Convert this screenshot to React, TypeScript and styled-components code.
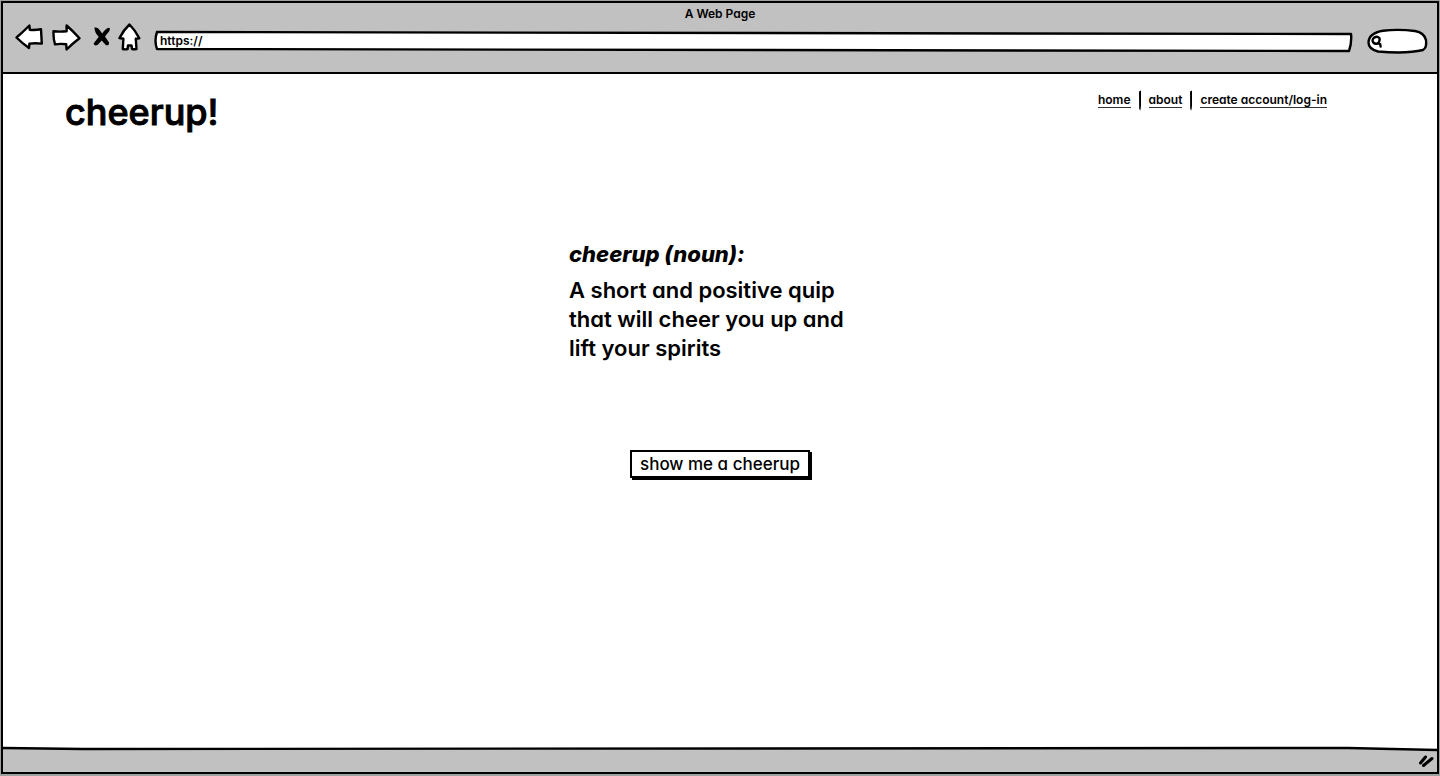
import React from "react";
import styled, { createGlobalStyle } from "styled-components";

const GlobalStyle = createGlobalStyle`
  *, *::before, *::after { box-sizing: border-box; }
  body {
    margin: 0;
    background: #fff;
    color: #000;
    font-family: Inter, Lato, sans-serif;
    font-feature-settings: "cv11" 1, "calt" 0;
    font-weight: 600;
  }
  h1, h2, p { margin: 0; }
  button, input { font: inherit; color: inherit; font-feature-settings: inherit; }
`;

const Frame = styled.div`
  min-height: 100vh;
  display: flex;
  flex-direction: column;
  padding: 1px 1px 2px;
  background: #9da19f;
`;

const Browser = styled.div`
  flex: 1;
  display: flex;
  flex-direction: column;
  border: 2px solid #000;
  background: #fff;
`;

const Chrome = styled.header`
  background: #c1c1c1;
  border-bottom: 2px solid #000;
  height: 71px;
`;

const WindowTitle = styled.div`
  padding-top: 3px;
  font-size: 12px;
  line-height: 16px;
  text-align: center;
`;

const Toolbar = styled.div`
  display: flex;
  align-items: center;
  padding: 0 9px 0 12px;
  height: 30px;
`;

const IconButton = styled.button<{ $gap: number }>`
  display: block;
  padding: 0;
  margin-right: ${(p) => p.$gap}px;
  border: 0;
  background: none;
  svg { display: block; }
`;

const Field = styled.label<{ $wide?: boolean }>`
  position: relative;
  display: flex;
  align-items: center;
  flex: ${(p) => (p.$wide ? "1 1 auto" : "0 0 61px")};
  height: ${(p) => (p.$wide ? 22 : 26)}px;
  margin-left: ${(p) => (p.$wide ? 0 : 14)}px;
  margin-top: 8px;
`;

const Outline = styled.svg`
  position: absolute;
  inset: 0;
  width: 100%;
  height: 100%;
  overflow: visible;
  path { vector-effect: non-scaling-stroke; }
`;

const FieldInput = styled.input`
  position: relative;
  width: 100%;
  min-width: 0;
  padding: 0 6px;
  border: 0;
  outline: 0;
  background: transparent;
  font-size: 12px;
  line-height: 16px;
`;

const SearchIcon = styled.svg`
  position: relative;
  flex: none;
  margin-left: 4px;
`;

const Page = styled.main`
  flex: 1;
  display: flex;
  flex-direction: column;
`;

const SiteHeader = styled.div`
  display: flex;
  justify-content: space-between;
  align-items: flex-start;
  padding: 14px 110px 0 62px;
`;

const Logo = styled.h1`
  font-size: 36px;
  line-height: 48px;
  font-weight: 500;
  -webkit-text-stroke: 1px #000;
`;

const Nav = styled.nav`
  display: flex;
  align-items: center;
  padding-top: 2px;
`;

const NavLink = styled.a`
  color: #000;
  font-size: 12px;
  line-height: 14px;
  text-decoration: none;
  border-bottom: 1px solid #333;
`;

const Divider = styled.svg`
  width: 18px;
  height: 21px;
`;

const Definition = styled.section`
  width: 302px;
  margin: 104px auto 0;
`;

const Term = styled.h2`
  font-size: 22px;
  line-height: 28px;
  font-weight: 800;
  font-style: italic;
`;

const Meaning = styled.p`
  padding-top: 8px;
  font-size: 22px;
  line-height: 29px;
  white-space: pre-line;
`;

const ShowButton = styled.button`
  align-self: center;
  height: 28px;
  margin: 87px 0 0;
  padding: 0 8px;
  border: 2px solid #000;
  background: #fff;
  box-shadow: 2px 2px 0 #000;
  font-size: 17px;
  line-height: 24px;
  font-weight: 500;
`;

const StatusBar = styled.footer`
  position: relative;
  display: flex;
  justify-content: flex-end;
  align-items: center;
  height: 24px;
  padding-right: 3px;
  background: #c1c1c1;
`;

const StatusRule = styled.svg`
  position: absolute;
  top: 0;
  left: 0;
  width: 100%;
  height: 4px;
  overflow: visible;
  path + path { vector-effect: non-scaling-stroke; }
`;

const ink = { stroke: "#000", strokeWidth: 2.4, strokeLinejoin: "round", strokeLinecap: "round" } as const;

const BackIcon = () => (
  <svg width="28" height="26" viewBox="0 0 28 26" fill="#fff" {...ink}>
    <path d="M1.5 13.5Q8 8 14.4 1.5L14.8 5.8Q20 6.4 26 5.2L26.8 19.6Q20 18.8 14.4 19.6L14 24Q7 19 1.5 13.5Z" />
  </svg>
);
const ForwardIcon = () => (
  <svg width="29" height="27" viewBox="0 0 29 27" fill="#fff" {...ink}>
    <path d="M1.5 7.2Q8 8 14.6 7.2L14.6 1.5Q21 7 27.5 14.2Q21 19 14.6 25.5L14.2 20.3Q9 19.4 3 20.4Q1.2 14 1.5 7.2Z" />
  </svg>
);
const StopIcon = () => (
  <svg width="18" height="20" viewBox="0 0 18 20" fill="#000">
    <path d="M1.4 .6Q4.4 0 6.2 2.4L9.2 6.5Q12 2 15.8 .8Q17.8 1.2 16.2 4.2L12 9.6 16 15.4Q16.4 18.6 13 18.2L8.7 13.6 4.8 17.8Q1 19.4 .6 16.6L5.8 9.8Q1.6 6 1.4 .6Z" />
  </svg>
);
const HomeIcon = () => (
  <svg width="23" height="28" viewBox="0 0 23 28" fill="#fff" {...ink}>
    <path d="M11.5 1.5Q17 7 21.3 15.2L17.8 15.8 18.5 26Q16 26.6 14 26L13.5 22.5H10L9.6 26Q7 26.8 4.8 26L5.4 15.8 1.5 15Q5.5 7 11.5 1.5Z" />
  </svg>
);

const NavDivider = () => (
  <Divider viewBox="0 0 18 21" aria-hidden="true">
    <path d="M8 1.5 10 .5 10 16 9.3 20.5 8.2 19Z" fill="#000" />
  </Divider>
);

export default function App() {
  return (
    <Frame>
      <GlobalStyle />
      <Browser>
        <Chrome>
          <WindowTitle>A Web Page</WindowTitle>
          <Toolbar>
            <IconButton $gap={9} aria-label="Back"><BackIcon /></IconButton>
            <IconButton $gap={12} aria-label="Forward"><ForwardIcon /></IconButton>
            <IconButton $gap={7} aria-label="Stop"><StopIcon /></IconButton>
            <IconButton $gap={13} aria-label="Home"><HomeIcon /></IconButton>
            <Field $wide>
              <Outline viewBox="0 0 1200 22" preserveAspectRatio="none" aria-hidden="true">
                <path d="M3 2 1198 4Q1199 12 1196 21L3 19Q0 11 3 2Z" fill="#fff" {...ink} />
              </Outline>
              <FieldInput aria-label="Address" defaultValue="https://" />
            </Field>
            <Field>
              <Outline viewBox="0 0 61 26" preserveAspectRatio="none" aria-hidden="true">
                <path d="M11 23.5Q1.5 21 1.5 14.5Q2 5 16 2.8Q31 .8 48 3Q57 4.4 59 12Q60 20 56 22Q40 26 11 23.5Z" fill="#fff" {...ink} />
              </Outline>
              <SearchIcon width="12" height="13" viewBox="0 0 12 13" fill="none" {...ink}>
                <path d="M3 2.8Q6 .6 8.4 3Q9.4 6.6 6.4 8.6Q2.4 9.4 1.6 6Q1.4 4 3 2.8M6.6 8.4 9.2 9.2 9.6 11.6" />
              </SearchIcon>
              <FieldInput aria-label="Search" />
            </Field>
          </Toolbar>
        </Chrome>
        <Page>
          <SiteHeader>
            <Logo>cheerup!</Logo>
            <Nav>
              <NavLink href="#home">home</NavLink>
              <NavDivider />
              <NavLink href="#about">about</NavLink>
              <NavDivider />
              <NavLink href="#account">create account/log-in</NavLink>
            </Nav>
          </SiteHeader>
          <Definition>
            <Term>cheerup (noun):</Term>
            <Meaning>{"A short and positive quip\nthat will cheer you up and\nlift your spirits"}</Meaning>
          </Definition>
          <ShowButton>show me a cheerup</ShowButton>
        </Page>
        <StatusBar>
          <StatusRule viewBox="0 0 1436 4" preserveAspectRatio="none" aria-hidden="true">
            <path d="M0 0H1436V3L1346 1Z" fill="#fff" />
            <path d="M0 0 80 1 1346 0 1436 2" fill="none" stroke="#000" strokeWidth="2.4" />
          </StatusRule>
          <svg width="16" height="14" viewBox="0 0 16 14" stroke="#000" strokeWidth="3" strokeLinecap="round" aria-hidden="true">
            <path d="M2.5 10 7.5 4M5.5 12.5 14 5.5" />
          </svg>
        </StatusBar>
      </Browser>
    </Frame>
  );
}
